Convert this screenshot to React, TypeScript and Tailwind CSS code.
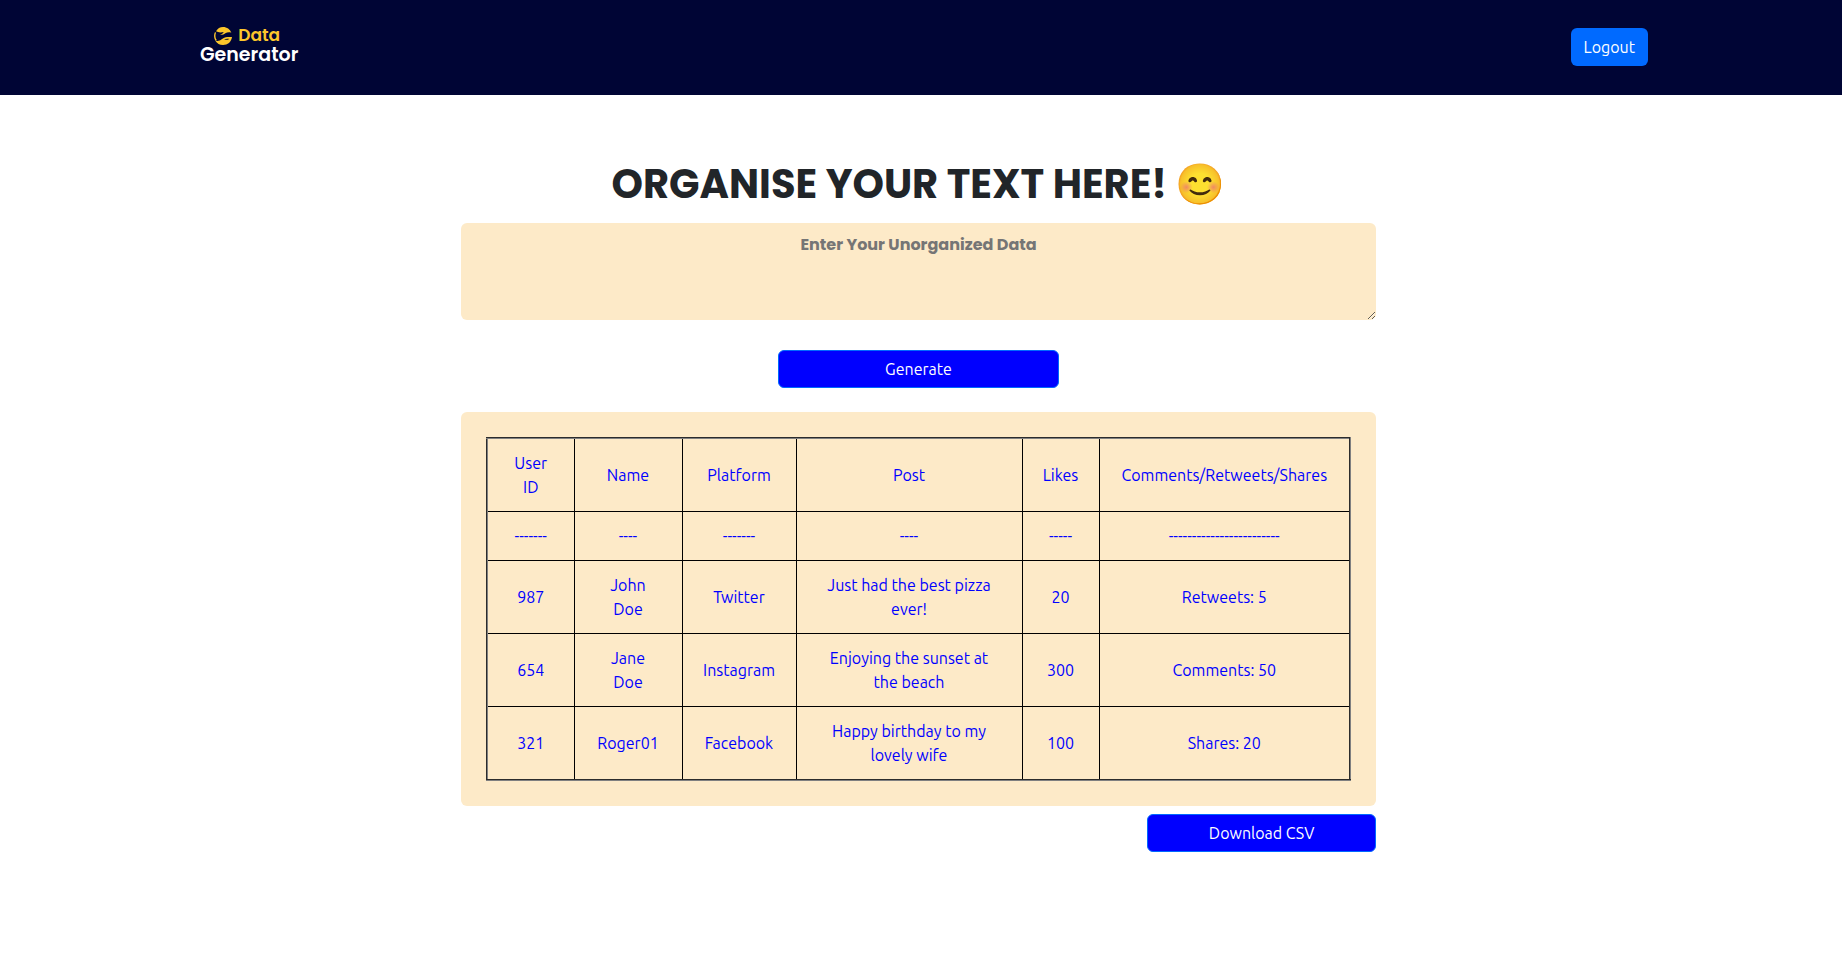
import { useState } from "react";

const columns = ["User ID", "Name", "Platform", "Post", "Likes", "Comments/Retweets/Shares"];

const rows = [
  ["-------", "----", "-------", "----", "-----", "------------------------"],
  ["987", "John Doe", "Twitter", "Just had the best pizza ever!", "20", "Retweets: 5"],
  ["654", "Jane Doe", "Instagram", "Enjoying the sunset at the beach", "300", "Comments: 50"],
  ["321", "Roger01", "Facebook", "Happy birthday to my lovely wife", "100", "Shares: 20"],
];

const cell = "border border-black px-5 py-3 text-center align-middle font-normal";

function Logo() {
  return (
    <a
      href="#"
      className="flex flex-col items-center pb-1 font-['Poppins','Inter',sans-serif] text-[19px] leading-5 font-semibold text-white"
    >
      <span className="flex items-end gap-1.5 pr-1 text-[17px] text-[#fcc62b]">
        <svg viewBox="0 0 54 54" className="size-[18px]" fill="currentColor" aria-hidden="true">
          <path d="M6 13 C11 4 18 0 27 0 C39 0 48 7 52 17 C45 14 39 16 34 19 C29 22 25 25 18 24 C23 22 27 19 29 15 C21 17 13 17 6 13 Z" />
          <path d="M54 30 C52 45 41 54 27 54 C17 54 9 49 4 41 C12 43 18 41 23 37 C28 33 33 30 40 30 Z M30 38 C35 39 41 39 46 36 C41 34 35 35 30 38 Z" fillRule="evenodd" />
          <path d="M3 15 L6 17 C3 25 4 33 9 40 L4 41 C-1 33 -1 23 3 15 Z" />
        </svg>
        Data
      </span>
      <span>Generator</span>
    </a>
  );
}

export default function App() {
  const [text, setText] = useState("");

  return (
    <div className="bg-white font-['Ubuntu','Noto_Sans',sans-serif] text-base leading-6 text-[#212529]">
      <header className="bg-[#000535]">
        <div className="flex h-[95px] items-center justify-between pr-[194px] pb-px pl-[200px]">
          <Logo />
          <button type="button" className="h-[38px] rounded-md bg-[#006aff] px-[13px] text-white">
            Logout
          </button>
        </div>
      </header>

      <main className="pt-[65px] pr-[5px] pb-16">
        <div className="mx-auto flex w-full max-w-[915px] flex-col">
          <h1 className="mb-[15px] text-center font-['Poppins','Inter',sans-serif] text-[40px] leading-[48px] font-bold">
            ORGANISE YOUR TEXT HERE! 😊
          </h1>
          <textarea
            aria-label="Unorganized data"
            placeholder="Enter Your Unorganized Data"
            value={text}
            onChange={(e) => setText(e.target.value)}
            className="h-[97px] w-full resize rounded-md bg-[#fdeac8] px-3 py-2.5 text-center font-['Poppins','Inter',sans-serif] text-base leading-6 font-bold placeholder:text-[#757575]"
          />
          <button
            type="button"
            className="mt-[30px] h-[38px] w-[281px] self-center rounded-md border border-[#006aff] bg-[#0000ff] text-white"
          >
            Generate
          </button>

          <section className="mt-6 rounded-md bg-[#fdeac8] py-[25px] pr-[26px] pl-[25px]">
            <table className="w-full table-fixed border-collapse border-2 border-[#808080] text-[#0000ff] [border-style:groove]">
              <colgroup>
                <col className="w-[87px]" />
                <col className="w-[108px]" />
                <col className="w-[114px]" />
                <col className="w-[226px]" />
                <col className="w-[77px]" />
                <col className="w-[251px]" />
              </colgroup>
              <thead>
                <tr>
                  {columns.map((name) => (
                    <th key={name} scope="col" className={cell}>
                      {name}
                    </th>
                  ))}
                </tr>
              </thead>
              <tbody>
                {rows.map((row) => (
                  <tr key={row[0]}>
                    {row.map((value, i) => (
                      <td key={i} className={cell}>
                        {value}
                      </td>
                    ))}
                  </tr>
                ))}
              </tbody>
            </table>
          </section>

          <button
            type="button"
            className="mt-2 h-[38px] w-1/4 self-end rounded-md border border-[#006aff] bg-[#0000ff] text-white"
          >
            Download CSV
          </button>
        </div>
      </main>
    </div>
  );
}
